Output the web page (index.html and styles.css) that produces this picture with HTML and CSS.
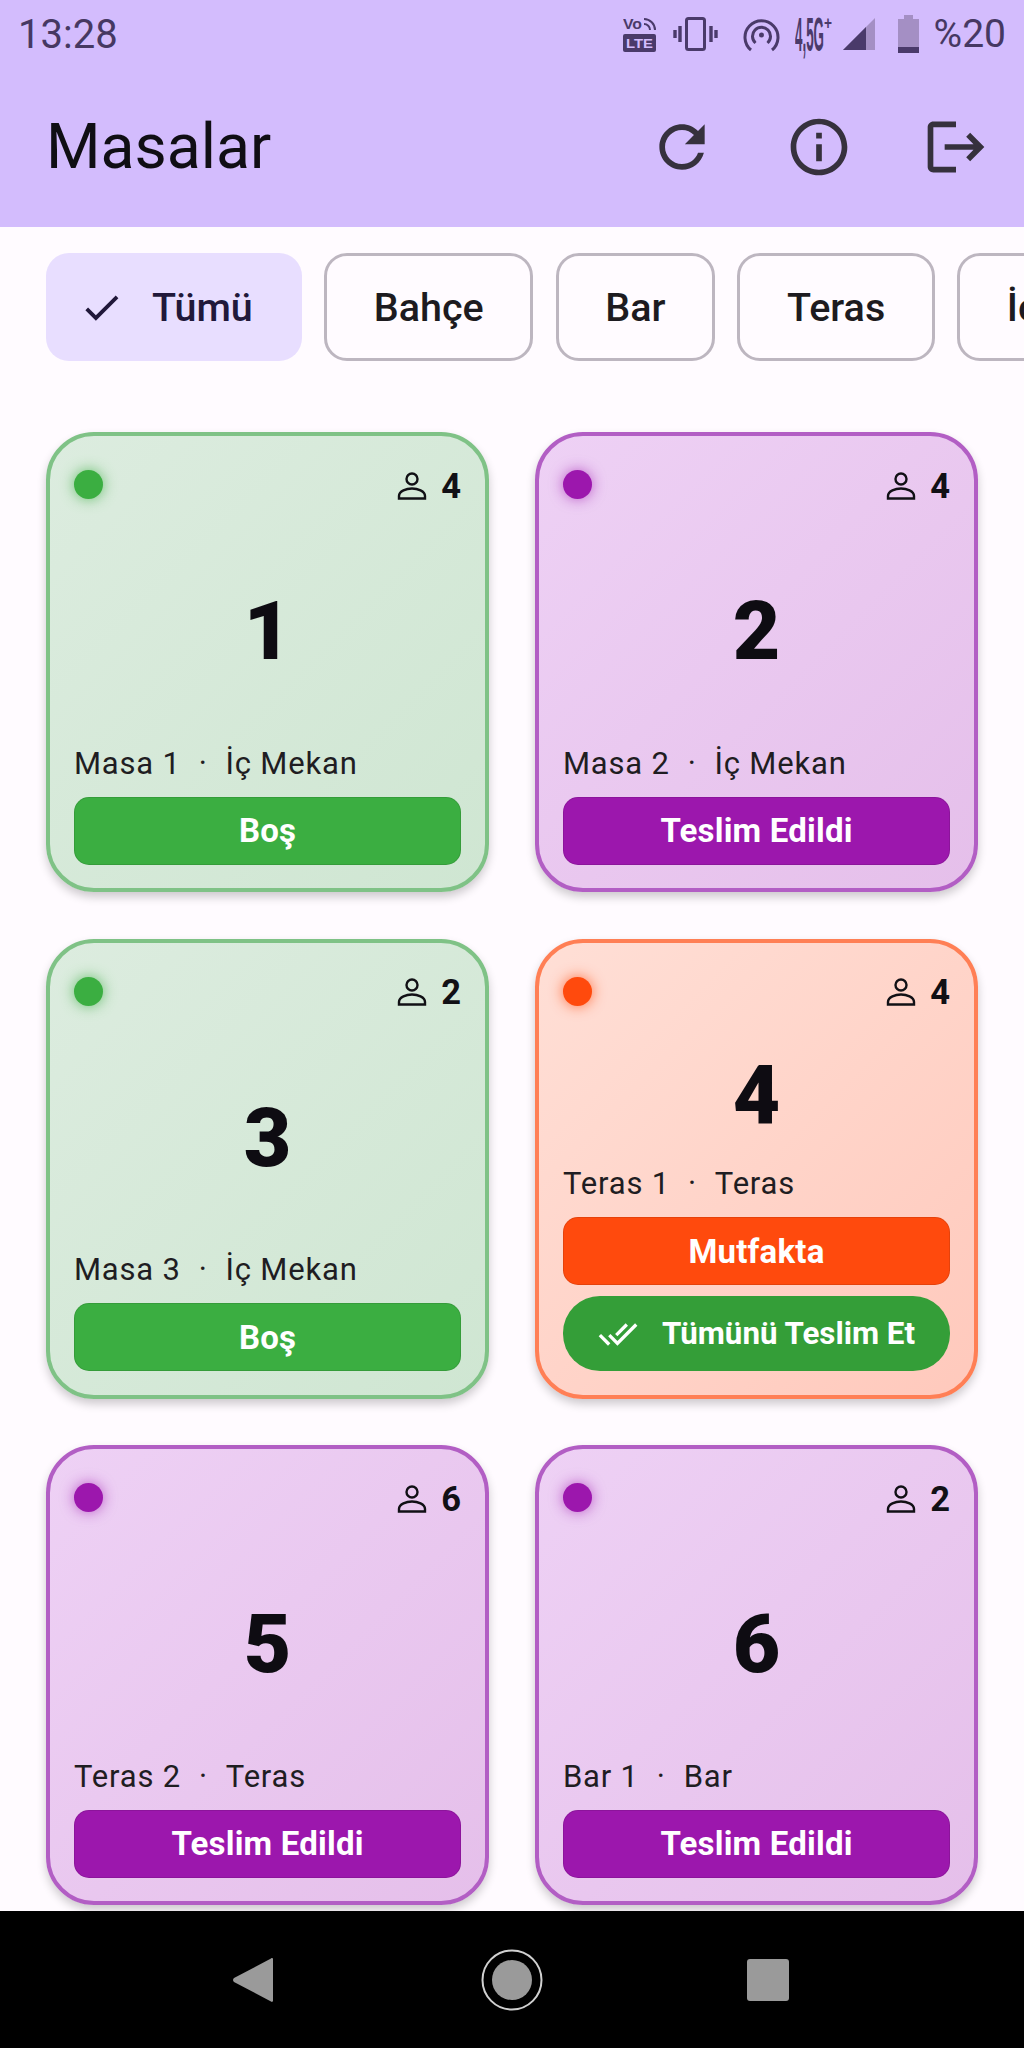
FILE: index.html
```html
<!DOCTYPE html>
<html lang="tr">
<head>
    <meta charset="UTF-8">
    <meta name="viewport" content="width=device-width, initial-scale=1.0">
    <title>Masalar</title>
    <link rel="stylesheet" href="styles.css">
</head>
<body>
    <svg class="icon-defs" width="0" height="0">
        <symbol id="i-person" viewBox="0 0 30 28"><circle cx="15" cy="7" r="5.500"/><path d="M2 26.500v-2.500c0-5 7.500-7.500 13-7.500s13 2.500 13 7.500v2.500z"/></symbol>
    </svg>

    <header class="header">
        <div class="status-bar">
            <span class="status-time">13:28</span>
            <div class="status-icons">
                <svg class="st-volte" width="33" height="36" viewBox="0 0 33 36">
                    <text x="0" y="13" class="st-text" font-size="14" textLength="19" lengthAdjust="spacingAndGlyphs">Vo</text>
                    <path d="M21 3a11 11 0 0 1 11 11M21 8a6 6 0 0 1 6 6" fill="none" stroke="#4a3a6a" stroke-width="2"/>
                    <rect x="0" y="18" width="33" height="18" rx="2" fill="#4a3a6a"/>
                    <text x="3" y="32" class="st-text-light" font-size="13" textLength="27" lengthAdjust="spacingAndGlyphs">LTE</text>
                </svg>
                <svg class="st-vibrate" width="45" height="34" viewBox="0 0 45 34" fill="none" stroke="#4a3a6a">
                    <rect x="13.500" y="1.500" width="18" height="31" rx="2" stroke-width="3"/>
                    <path d="M7 9v16M2 13v8M38 9v16M43 13v8" stroke-width="3.400"/>
                </svg>
                <svg class="st-hotspot" width="37" height="35" viewBox="0 0 37 35" fill="none" stroke="#4a3a6a" stroke-width="3">
                    <path d="M8 33a16.500 16.500 0 1 1 21 0"/>
                    <path d="M12.500 26a9 9 0 1 1 12 0"/>
                    <circle cx="18.500" cy="18" r="2.500" fill="#4a3a6a" stroke="none"/>
                </svg>
                <svg class="st-network" width="37" height="54" viewBox="0 0 37 54">
                    <text x="0" y="44" class="st-text" font-size="48" textLength="29" lengthAdjust="spacingAndGlyphs">4,5G</text>
                    <text x="29" y="22" class="st-text" font-size="18" textLength="8" lengthAdjust="spacingAndGlyphs">+</text>
                </svg>
                <svg class="st-signal" width="32" height="32" viewBox="0 0 32 32">
                    <path d="M32 0v32H0z" fill="#a48fc4"/>
                    <path d="M23 9v23H0z" fill="#4a3a6a"/>
                </svg>
                <svg class="st-battery" width="21" height="38" viewBox="0 0 21 38">
                    <path d="M6 0h9v4h6v34H0V4h6z" fill="#a48fc4"/>
                    <rect x="0" y="32" width="21" height="6" fill="#4a3a6a"/>
                </svg>
                <span class="status-battery">%20</span>
            </div>
        </div>
        <div class="app-bar">
            <h1 class="app-title">Masalar</h1>
            <div class="app-actions">
                <button class="icon-btn"><svg viewBox="0 0 24 24"><path d="M17.650 6.350C16.200 4.900 14.210 4 12 4c-4.420 0-7.990 3.580-7.990 8s3.570 8 7.990 8c3.730 0 6.840-2.550 7.730-6h-2.080c-.82 2.330-3.040 4-5.650 4-3.310 0-6-2.690-6-6s2.690-6 6-6c1.660 0 3.140.69 4.220 1.780L13 11h7V4l-2.350 2.350z"/></svg></button>
                <button class="icon-btn"><svg viewBox="0 0 24 24"><path d="M11 7h2v2h-2zm0 4h2v6h-2zm1-9C6.480 2 2 6.480 2 12s4.480 10 10 10 10-4.480 10-10S17.520 2 12 2zm0 18c-4.410 0-8-3.590-8-8s3.590-8 8-8 8 3.590 8 8-3.590 8-8 8z"/></svg></button>
                <button class="icon-btn"><svg viewBox="0 0 24 24"><path d="M17 7l-1.410 1.410L18.170 11H8v2h10.170l-2.580 2.580L17 17l5-5zM4 5h8V3H4c-1.100 0-2 .9-2 2v14c0 1.100.9 2 2 2h8v-2H4V5z"/></svg></button>
            </div>
        </div>
    </header>

    <main class="content">
        <div class="chips">
            <div class="chip chip-selected">
                <svg class="chip-check" viewBox="0 0 24 24"><path d="M9 16.170L4.830 12l-1.420 1.410L9 19 21 7l-1.410-1.410z"/></svg>
                <span>Tümü</span>
            </div>
            <div class="chip">Bahçe</div>
            <div class="chip">Bar</div>
            <div class="chip">Teras</div>
            <div class="chip">İç Mekan</div>
        </div>

        <div class="tables">
            <div class="card card-free">
                <div class="card-top">
                    <span class="dot"></span>
                    <span class="seats"><svg class="seat-icon"><use href="#i-person"/></svg>4</span>
                </div>
                <div class="card-number">1</div>
                <div class="card-label"><span>Masa 1</span><span>·</span><span>İç Mekan</span></div>
                <div class="status-btn">Boş</div>
            </div>

            <div class="card card-served">
                <div class="card-top">
                    <span class="dot"></span>
                    <span class="seats"><svg class="seat-icon"><use href="#i-person"/></svg>4</span>
                </div>
                <div class="card-number">2</div>
                <div class="card-label"><span>Masa 2</span><span>·</span><span>İç Mekan</span></div>
                <div class="status-btn">Teslim Edildi</div>
            </div>

            <div class="card card-free">
                <div class="card-top">
                    <span class="dot"></span>
                    <span class="seats"><svg class="seat-icon"><use href="#i-person"/></svg>2</span>
                </div>
                <div class="card-number">3</div>
                <div class="card-label"><span>Masa 3</span><span>·</span><span>İç Mekan</span></div>
                <div class="status-btn">Boş</div>
            </div>

            <div class="card card-kitchen">
                <div class="card-top">
                    <span class="dot"></span>
                    <span class="seats"><svg class="seat-icon"><use href="#i-person"/></svg>4</span>
                </div>
                <div class="card-number">4</div>
                <div class="card-label"><span>Teras 1</span><span>·</span><span>Teras</span></div>
                <div class="status-btn">Mutfakta</div>
                <div class="deliver-btn">
                    <svg class="deliver-icon" viewBox="0 0 24 24"><path d="M18 7l-1.410-1.410-6.340 6.340 1.410 1.410L18 7zm4.240-1.410L11.660 16.170 7.480 12l-1.410 1.410L11.660 19l12-12-1.420-1.410zM.41 13.410L6 19l1.410-1.410L1.830 12 .41 13.410z"/></svg>
                    <span>Tümünü Teslim Et</span>
                </div>
            </div>

            <div class="card card-served">
                <div class="card-top">
                    <span class="dot"></span>
                    <span class="seats"><svg class="seat-icon"><use href="#i-person"/></svg>6</span>
                </div>
                <div class="card-number">5</div>
                <div class="card-label"><span>Teras 2</span><span>·</span><span>Teras</span></div>
                <div class="status-btn">Teslim Edildi</div>
            </div>

            <div class="card card-served">
                <div class="card-top">
                    <span class="dot"></span>
                    <span class="seats"><svg class="seat-icon"><use href="#i-person"/></svg>2</span>
                </div>
                <div class="card-number">6</div>
                <div class="card-label"><span>Bar 1</span><span>·</span><span>Bar</span></div>
                <div class="status-btn">Teslim Edildi</div>
            </div>
        </div>
    </main>

    <nav class="nav-bar">
        <svg class="nav-back" width="40" height="46" viewBox="0 0 40 46"><path d="M38 1.500c1-.8 2-.3 2 1v41c0 1.300-1 1.800-2 1L1 25c-1.300-1-1.300-3 0-4z"/></svg>
        <svg class="nav-home" width="62" height="62" viewBox="0 0 62 62"><circle cx="31" cy="31" r="29.500" fill="none" stroke="#d0d0d0" stroke-width="2"/><circle cx="31" cy="31" r="20"/></svg>
        <svg class="nav-recent" width="42" height="42" viewBox="0 0 42 42"><rect width="42" height="42" rx="3"/></svg>
    </nav>
</body>
</html>
```

FILE: styles.css
```css
* {
    box-sizing: border-box;
}
body {
    margin: 0;
    height: 2048px;
    display: flex;
    flex-direction: column;
    overflow: hidden;
    font-family: Roboto, "Liberation Sans", sans-serif;
    background: #fffbff;
    color: #1d1b20;
}
.icon-defs {
    position: absolute;
}

/* header */
.header {
    height: 227px;
    background: #d3bcfd;
}
.status-bar {
    height: 68px;
    padding: 0 18px;
    display: flex;
    align-items: center;
    justify-content: space-between;
    color: #463862;
    font-size: 39px;
}
.status-time {
    font-size: 40px;
}
.status-icons {
    display: flex;
    align-items: center;
}
.status-icons svg {
    display: block;
    overflow: hidden;
}
.st-text {
    font-family: "Liberation Sans", sans-serif;
    font-weight: 700;
    fill: #4a3a6a;
}
.st-text-light {
    font-family: "Liberation Sans", sans-serif;
    font-weight: 700;
    fill: #d3bcfd;
}
.st-vibrate {
    margin-left: 17px;
}
.st-hotspot {
    margin-left: 25px;
}
.st-network {
    margin-left: 15px;
}
.st-signal {
    margin-left: 11px;
}
.st-battery {
    margin-left: 23px;
}
.status-battery {
    margin-left: 15px;
}
.app-bar {
    height: 157px;
    padding-left: 46px;
    display: flex;
    align-items: center;
    justify-content: space-between;
}
.app-title {
    margin: 0;
    font-size: 62.500px;
    font-weight: 400;
    color: #100e14;
}
.app-actions {
    display: flex;
}
.icon-btn {
    width: 137px;
    height: 136px;
    padding: 0;
    border: 0;
    background: none;
    display: flex;
    align-items: center;
    justify-content: center;
}
.icon-btn svg {
    width: 68px;
    height: 68px;
    fill: #36313d;
}

/* filter chips */
.content {
    flex: 1;
    min-height: 0;
    overflow: hidden;
    padding: 26px 0 0 46px;
}
.chips {
    display: flex;
    gap: 22.500px;
    white-space: nowrap;
}
.chip {
    height: 108px;
    padding: 0 46.500px;
    flex: none;
    display: flex;
    align-items: center;
    border: 3px solid #bdb6c0;
    border-radius: 23px;
    font-size: 39.500px;
    font-weight: 500;
}
.chip-selected {
    padding: 0 49px 0 33px;
    border: 0;
    background: #e8deff;
    color: #21183a;
}
.chip-check {
    width: 45px;
    height: 45px;
    margin-right: 28px;
    fill: #21183a;
}

/* table cards */
.tables {
    margin-top: 71px;
    width: 932px;
    display: grid;
    grid-template-columns: 443px 443px;
    grid-auto-rows: 460px;
    gap: 46.500px 46px;
}
.card {
    display: flex;
    flex-direction: column;
    padding: 33.500px 24px 23.500px;
    border: 4px solid;
    border-radius: 48px;
    box-shadow: 0 5px 10px rgba(0, 0, 0, 0.2);
}
.card-free {
    border-color: #7fc286;
    background: linear-gradient(135deg, #dcecdf, #cfe6d2);
}
.card-served {
    border-color: #b25ec4;
    background: linear-gradient(135deg, #eed1f5, #e5bfea);
}
.card-kitchen {
    border-color: #ff7f55;
    background: linear-gradient(135deg, #ffdfd6, #ffc9bc);
}
.card-top {
    display: flex;
    align-items: center;
    justify-content: space-between;
    height: 30px;
}
.dot {
    width: 29px;
    height: 29px;
    border-radius: 50%;
}
.card-free .dot {
    background: #3bae41;
    box-shadow: 0 0 14px rgba(59, 174, 65, 0.75);
}
.card-served .dot {
    background: #9c17ad;
    box-shadow: 0 0 14px rgba(156, 23, 173, 0.65);
}
.card-kitchen .dot {
    background: #ff4a0d;
    box-shadow: 0 0 14px rgba(255, 74, 13, 0.75);
}
.seats {
    display: flex;
    align-items: center;
    margin-top: 2px;
    font-size: 34.500px;
    font-weight: 700;
    color: #111015;
}
.seat-icon {
    width: 30px;
    height: 28px;
    margin-right: 14px;
    fill: none;
    stroke: #111015;
    stroke-width: 2.400;
}
.card-number {
    flex: 1;
    padding-top: 18px;
    display: flex;
    align-items: center;
    justify-content: center;
    font-size: 82px;
    font-weight: 900;
    line-height: 1;
    color: #0e0c12;
}
.card-label {
    display: flex;
    gap: 18px;
    margin-bottom: 15px;
    font-size: 31px;
    line-height: 37px;
    letter-spacing: 0.8px;
    color: #1f1d22;
}
.status-btn {
    height: 68px;
    flex: none;
    display: flex;
    align-items: center;
    justify-content: center;
    border: 1.500px solid rgba(0, 0, 0, 0.1);
    border-radius: 15px;
    font-size: 33px;
    font-weight: 700;
    letter-spacing: 0.2px;
    color: #fff;
}
.card-free .status-btn {
    background: #3bae41;
}
.card-served .status-btn {
    background: #9c17ad;
}
.card-kitchen .status-btn {
    background: #ff4a0d;
}
.deliver-btn {
    height: 75px;
    margin-top: 11px;
    flex: none;
    display: flex;
    align-items: center;
    justify-content: center;
    border-radius: 37px;
    background: #349e38;
    font-size: 31.300px;
    font-weight: 700;
    color: #fff;
}
.deliver-icon {
    width: 40px;
    height: 40px;
    margin-right: 24px;
    fill: #fff;
}

/* android navigation */
.nav-bar {
    height: 137px;
    padding: 0 128px;
    flex: none;
    display: grid;
    grid-template-columns: repeat(3, 1fr);
    align-items: center;
    justify-items: center;
    background: #000;
}
.nav-bar svg {
    fill: #9a9a9a;
}
.nav-back {
    margin-right: 6px;
}
```
